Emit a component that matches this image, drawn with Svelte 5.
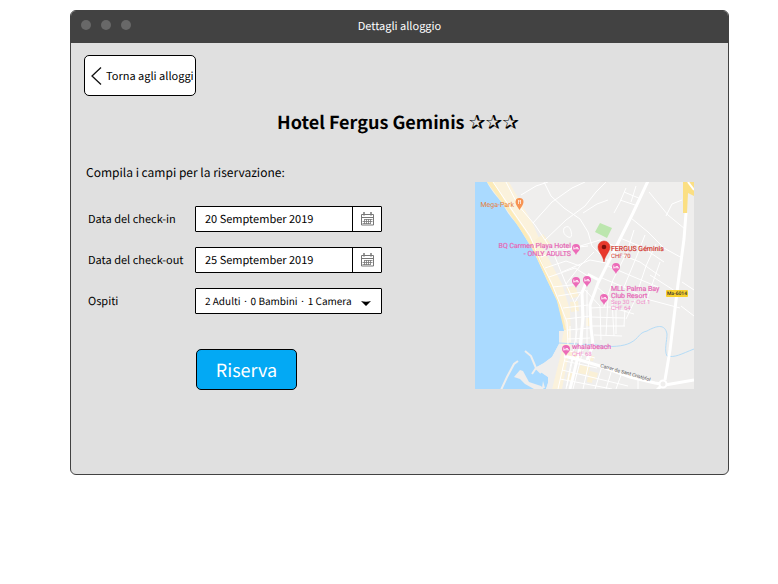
<script>
  let checkIn = $state('20 Semptember 2019');
  let checkOut = $state('25 Semptember 2019');
  let guests = $state('2 Adulti · 0 Bambini · 1 Camera');

  const hotelPins = [
    [576, 248],
    [576, 281],
    [587, 280],
    [616, 267],
    [604, 298],
    [566, 349]
  ];

  const streets = [
    'M493 182L512 210L530 236L540 260L552 284L560 304L567 322L568 345L558 389',
    'M506 182L518 205L535 225L553 252L566 284L575 304L577 330L572 358L566 389',
    'M521 195L536 186L548 182',
    'M533 223L552 202L572 188L585 182',
    'M545 240L566 220L585 206L596 192L606 182',
    'M554 254L600 240L624 250',
    'M562 272L590 260L606 263',
    'M544 182L551 196L564 208L580 219L588 232L592 246L602 256L610 262',
    'M564 228q5 -4 7 3q2 8 -3 6q-6 -3 -4 -9',
    'M583 213L597 204L608 200',
    'M620 200L638 206M624 192L641 199M626 188L620 202L614 213M636 186L631 202',
    'M649 192L668 215L685 229',
    'M631 218L648 232L664 248L682 258',
    'M634 230L627 252L613 280L604 307',
    'M645 235L636 258L624 287M656 244L646 266L638 290',
    'M620 238L642 247L664 262M614 252L640 262L660 276M608 266L634 277L658 287',
    'M602 278L626 288L650 300L680 308',
    'M660 262L646 302M666 216L672 204L682 200',
    'M682 282L694 290M681 306L694 316M650 275L678 293',
    'M596 286L612 300L614 336M585 290L600 306L601 340M608 298L606 335',
    'M590 308L610 307L634 314M591 317L624 318M591 326L625 326M594 335L622 336',
    'M625 308L624 326M635 300L626 319M616 306V334',
    'M549 277L575 268L591 278M553 287L580 284M558 296L582 292M563 308L588 305',
    'M566 319L590 316M568 330L590 328M568 339L590 338',
    'M570 326V342M576 310V342M582 300V345M587 290V345',
    'M566 350L595 358M565 361L597 368M562 370L628 386M560 379L612 389',
    'M584 346L573 389M592 349L583 389M602 366L595 389M612 369L606 389M621 375L616 389',
    'M574 353L567 386M638 379V389',
    'M545 268L566 261L580 266M541 257L560 249L588 246M566 284L580 266L594 252M575 302L586 284'
  ];
</script>

{#snippet calendar()}
  <svg width="14" height="14" viewBox="0 0 14 14" fill="none" stroke="#777" aria-hidden="true">
    <path d="M1.500 2.500h12v10.500h-12zM1.500 5.500h12" />
    <path d="M4 0v3.500M11 0v3.500" stroke-width="1.500" />
    <path d="M4.500 7.500h8M2.500 9.500h10M2.500 11.500h8M4.500 7v5M6.500 7v5M8.500 7v5M10.500 7v5" stroke-width=".8" />
  </svg>
{/snippet}

<div class="window">
  <header>
    <span class="dots" aria-hidden="true"><i></i><i></i><i></i></span>
    <span class="caption">Dettagli alloggio</span>
  </header>

  <main>
    <button class="back" type="button">
      <svg width="11" height="20" viewBox="0 0 11 20" fill="none" stroke="#111" stroke-width="1.300" aria-hidden="true">
        <path d="M10 1.500L1 10l9 8.500" />
      </svg>
      Torna agli alloggi
    </button>

    <h1>Hotel Fergus Geminis <span>✰✰✰</span></h1>

    <div class="columns">
      <form onsubmit={(e) => e.preventDefault()}>
        <p>Compila i campi per la riservazione:</p>
        <div class="fields">
          <label for="checkin">Data del check-in</label>
          <div class="box">
            <input id="checkin" type="text" bind:value={checkIn} />
            <button type="button" aria-label="Scegli la data del check-in">{@render calendar()}</button>
          </div>

          <label for="checkout">Data del check-out</label>
          <div class="box">
            <input id="checkout" type="text" bind:value={checkOut} />
            <button type="button" aria-label="Scegli la data del check-out">{@render calendar()}</button>
          </div>

          <label for="guests">Ospiti</label>
          <div class="box pick">
            <select id="guests" bind:value={guests}>
              <option>2 Adulti · 0 Bambini · 1 Camera</option>
            </select>
            <svg width="10" height="5" viewBox="0 0 10 5" aria-hidden="true"><path d="M0 0Q5 1.500 10 0L5 5z" /></svg>
          </div>

          <button class="submit" type="submit">Riserva</button>
        </div>
      </form>

      <svg class="map" viewBox="475 182 219 207" role="img" aria-label="Mappa">
        <path d="M475 182H694V389H475z" fill="#efeeed" />
        <path d="M487 182H509L532 222L544 250L562 284L570 310L571 343L562 389H552L564 330L547 281L533 249L503 204z" fill="#fbf2dc" />
        <g fill="#faf0d6">
          <path d="M566 288l9-2 4 10-8 3zM570 302l8-1 1 10-8 1zM569 350l12 3-2 8-12-3zM580 365l10 2-2 8-10-2zM590 371l8 2-2 7-8-2zM568 372l7 2-2 8-7-2zM535 240l8-6 8 10-10 5zM588 376l5 1-1 6-5-1zM586 318h5v8h-5zM588 355l6 1-1 5-6-1z" />
        </g>
        <path d="M475 182H487C491 191 497 196 503 204C509 217 514 219 520 229L533 250L547 280L557 300L563 323L564 331H559V344L552 357Q545 363 535 368L548 377V383L546 389H475z" fill="#aadaff" />
        <path d="M487 182H493L506 203L524 229L537 250L550 281L560 304L566 330H564L557 301L547 280L533 250L520 229L503 204z" fill="#fcebb9" />
        <path d="M559 344L552 357Q545 363 535 368L548 377V383L546 389H552L563 346z" fill="#efeeed" />
        <path d="M514 377L520 370 523 371 529 382 541 386 544 389H534L525 384 520 379zM542 388L543 381 545 388z" fill="#efeeed" />
        <path d="M501 390L507 377 514 364 518 361M525 351L531 356 536 368 532 374M536 368L541 373" fill="none" stroke="#efeeed" stroke-width="2" />
        <path d="M600 223L612 228L607 238L595 232z" fill="#bce6ae" />
        <path d="M559 343L597 345C611 348 624 346 630 343C640 338 638 333 647 331C656 326 665 323 667 334C667 341 664 350 667 356C675 358 681 354 694 349" fill="none" stroke="#b5dcf7" />

        <g fill="none" stroke="#fff">
          {#each streets as d}
            <path {d} />
          {/each}
          <path d="M648 181L633 213L618 243L598 283L590 305L591 328L593 345L587 360" stroke-width="3" />
          <path d="M599 280L589 275L582 293L583 318L580 348L570 389" stroke-width="3" />
          <path d="M686 213L684 239L678 284L670 350L665 380" stroke-width="3" />
          <path d="M564 356L580 360L600 366L630 377L655 383L661 384M665 385L694 380M663 384L657 390" stroke-width="3" />
        </g>
        <path d="M683 182V213H687L688 193L694 196V182z" fill="#fbdf83" />
        <path d="M688 182L694 190" stroke="#fff" stroke-width="2" />
        <circle cx="663" cy="384" r="3.500" fill="#efeeed" stroke="#fff" stroke-width="2" />

        <g class="place">
          <path d="M519.500 210C518 207 515.500 205 515.500 202A4 4 0 0 1 523.500 202C523.500 205 521 207 519.500 210z" fill="#f79352" />
          <path d="M518.500 200v4M520.500 200v4M518.500 201h2" stroke="#fff" stroke-width=".7" />
          <text x="514" y="207" text-anchor="end" fill="#e5803d">Mega-Park</text>
        </g>

        {#each hotelPins as [x, y]}
          <g transform="translate({x} {y})">
            <path d="M0 7C-1 4-4 3-4 0A4 4 0 0 1 4 0C4 3 1 4 0 7z" fill="#ec6bb8" />
            <path d="M-2.200-1.500v3M2.200 0v1.500M-2.200.7h4.400M-.4-.5h2.400" stroke="#fff" stroke-width=".8" />
          </g>
        {/each}

        <g class="place pink">
          <text x="571" y="248" text-anchor="end">BQ Carmen Playa Hotel</text>
          <text x="571" y="256" text-anchor="end">- ONLY ADULTS</text>
          <text x="611" y="291">MLL Palma Bay</text>
          <text x="611" y="298">Club Resort</text>
          <text class="price" x="611" y="304">Sep 30 – Oct 1</text>
          <text class="price" x="611" y="310">CHF 64</text>
          <text x="572" y="349">whala!beach</text>
          <text class="price" x="572" y="356">CHF 68</text>
        </g>

        <path d="M604 262C603 255 598 252 598 247A6 6 0 0 1 610 247C610 252 605 255 604 262z" fill="#e8392d" stroke="#d9342a" stroke-width=".5" />
        <circle cx="604" cy="247" r="2.300" fill="#7b100c" />
        <g class="place red">
          <text x="611" y="251">FERGUS Géminis</text>
          <text class="cost" x="611" y="258">CHF 70</text>
        </g>

        <rect x="666" y="290" width="22" height="7" rx="1" fill="#f7d02e" />
        <text class="road" x="677" y="295" text-anchor="middle" fill="#333">Ma-6014</text>
        <text class="street" transform="translate(600 367) rotate(16)" fill="#555">Carrer de Sant Cristòfol</text>
      </svg>
    </div>
  </main>
</div>

<style>
  :global(body) {
    background: #fff;
  }

  .window {
    box-sizing: border-box;
    min-height: 465px;
    margin: 10px 49px 0 70px;
    overflow: hidden;
    border: 1px solid #424242;
    border-radius: 6px;
    background: #e0e0e0;
    color: #000;
    font-family: 'Noto Sans CJK KR', 'Noto Sans', sans-serif;
    font-size: 11px;
    line-height: 16px;
    text-rendering: geometricPrecision;
  }

  header {
    display: grid;
    grid-template-columns: 1fr auto 1fr;
    align-items: center;
    height: 32px;
    background: #424242;
    color: #fff;
  }

  .dots {
    display: flex;
    gap: 10px;
    padding: 0 0 4px 10px;
  }

  .dots i {
    width: 10px;
    height: 10px;
    border-radius: 50%;
    background: #686868;
  }

  .caption {
    padding-bottom: 2px;
  }

  main {
    padding: 12px 34px 20px 13px;
  }

  button,
  input,
  select {
    box-sizing: border-box;
    margin: 0;
    color: inherit;
    font: inherit;
    text-rendering: inherit;
  }

  .back {
    display: flex;
    align-items: center;
    gap: 4px;
    height: 41px;
    padding: 0 1px 0 6px;
    border: 1px solid #000;
    border-radius: 5px;
    background: #fff;
    white-space: nowrap;
  }

  h1 {
    margin: 12px 0 0;
    padding-left: 18px;
    font-size: 18px;
    font-weight: 700;
    line-height: 28px;
    text-align: center;
  }

  h1 span {
    font-family: 'DejaVu Sans', sans-serif;
    font-size: 20px;
    font-weight: 400;
  }

  .columns {
    display: flex;
    justify-content: space-between;
    align-items: flex-start;
    gap: 20px;
    margin-top: 26px;
  }

  p {
    margin: 0 0 22px 2px;
    font-size: 12px;
    line-height: 22px;
  }

  .fields {
    display: grid;
    grid-template-columns: 107px 187px;
    row-gap: 15px;
    align-items: center;
    padding-left: 4px;
  }

  .box {
    display: flex;
    box-sizing: border-box;
    height: 26px;
    border: 1px solid #000;
    border-radius: 1px;
    background: #fff;
  }

  .box input {
    flex: 1;
    min-width: 0;
    padding: 0 9px;
    border: 0;
    background: none;
  }

  .box button {
    display: grid;
    place-items: center;
    width: 29px;
    padding: 0;
    border: 0;
    border-left: 1px solid #000;
    background: none;
  }

  .pick {
    display: grid;
    align-items: center;
  }

  .pick select,
  .pick svg {
    grid-area: 1 / 1;
  }

  .pick select {
    width: 100%;
    height: 24px;
    padding: 0 9px;
    border: 0;
    appearance: none;
    background: none;
    font-size: 10px;
  }

  .pick svg {
    justify-self: end;
    margin: 4px 10px 0 0;
    pointer-events: none;
  }

  .submit {
    grid-column: 2;
    justify-self: start;
    width: 101px;
    height: 41px;
    margin: 20px 0 0 1px;
    padding: 0;
    border: 1px solid #000;
    border-radius: 5px;
    background: #03a9f4;
    color: #fff;
    font-size: 18px;
    line-height: 28px;
  }

  .map {
    flex: none;
    width: 219px;
    height: 207px;
    margin-top: 20px;
    font-family: Roboto, 'Liberation Sans', sans-serif;
  }

  .place {
    font-size: 7px;
  }

  .place text {
    stroke-width: 0.2px;
  }

  .pink {
    fill: #e667b6;
    stroke: #e667b6;
  }

  .red {
    fill: #d2382f;
    stroke: #d2382f;
  }

  .price {
    font-size: 6px;
    fill: #f08bca;
    stroke: none;
  }

  .cost {
    font-size: 6px;
    stroke: none;
  }

  .road {
    font-size: 5px;
    font-weight: 500;
  }

  .street {
    font-size: 5px;
  }
</style>
